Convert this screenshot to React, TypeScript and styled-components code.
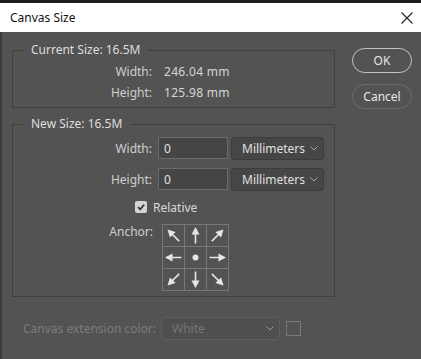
import React from 'react'
import styled, { createGlobalStyle } from 'styled-components'

const GlobalStyle = createGlobalStyle`
    html, body {
        margin: 0;
        padding: 0;
        background: #535353;
    }
    body {
        font-family: "Noto Sans", "Open Sans", sans-serif;
        font-size: 12px;
    }
`;

const anchors = [-45, 0, 45, -90, null, 90, -135, 180, 135];

const Chevron = () => (
    <svg width="8" height="5" viewBox="0 0 8 5">
        <path d="M0.5 0.5 L4 4 L7.5 0.5" fill="none" stroke="#a8a8a8" strokeWidth="1" />
    </svg>
);

const Arrow = ({ angle }: { angle: number | null }) => {
    if (angle === null) {
        return (
            <svg width="21" height="21" viewBox="0 0 21 21">
                <circle cx="10.5" cy="10.5" r="3" fill="#e6e6e6" />
            </svg>
        );
    }
    return (
        <svg width="21" height="21" viewBox="0 0 21 21" style={{ transform: `rotate(${angle}deg)` }}>
            <line x1="10.5" y1="18.5" x2="10.5" y2="8" stroke="#e6e6e6" strokeWidth="1.6" />
            <polygon points="10.5,2 6.5,9.5 14.5,9.5" fill="#e6e6e6" />
        </svg>
    );
};

const App = () => {
    return (
        <Window>
            <GlobalStyle />
            <TitleBar>
                <Title>Canvas Size</Title>
                <svg width="12" height="12" viewBox="0 0 12 12">
                    <path d="M0.5 0.5 L11.5 11.5 M11.5 0.5 L0.5 11.5" stroke="#222" strokeWidth="1.1" />
                </svg>
            </TitleBar>
            <Body>
                <Main>
                    <Group>
                        <Legend>Current Size: 16.5M</Legend>
                        <InfoRow>
                            <Label>Width:</Label>
                            <Value>246.04 mm</Value>
                        </InfoRow>
                        <InfoRow>
                            <Label>Height:</Label>
                            <Value>125.98 mm</Value>
                        </InfoRow>
                    </Group>
                    <Group $new>
                        <Legend>New Size: 16.5M</Legend>
                        <FieldRow>
                            <Label>Width:</Label>
                            <Input>0</Input>
                            <Select>Millimeters<Chevron /></Select>
                        </FieldRow>
                        <FieldRow>
                            <Label>Height:</Label>
                            <Input>0</Input>
                            <Select>Millimeters<Chevron /></Select>
                        </FieldRow>
                        <CheckRow>
                            <CheckBox>
                                <svg width="10" height="10" viewBox="0 0 10 10">
                                    <path d="M2 5 L4.2 7.3 L8.2 2.6" fill="none" stroke="#3a3a3a" strokeWidth="1.8" />
                                </svg>
                            </CheckBox>
                            <span>Relative</span>
                        </CheckRow>
                        <AnchorRow>
                            <AnchorLabel>Anchor:</AnchorLabel>
                            <AnchorGrid>
                                {anchors.map((a, i) => (
                                    <AnchorCell key={i}>
                                        <Arrow angle={a} />
                                    </AnchorCell>
                                ))}
                            </AnchorGrid>
                        </AnchorRow>
                    </Group>
                    <ExtensionRow>
                        <span>Canvas extension color:</span>
                        <DisabledSelect>White<Chevron /></DisabledSelect>
                        <Swatch />
                    </ExtensionRow>
                </Main>
                <Buttons>
                    <Button $primary>OK</Button>
                    <Button>Cancel</Button>
                </Buttons>
            </Body>
        </Window>
    )
}

export default App

const Window = styled.div`
    width: 421px;
    height: 359px;
    display: flex;
    flex-direction: column;
    border-top: 3px solid #1c1c1c;
    box-sizing: border-box;
    overflow: hidden;
`;

const TitleBar = styled.div`
    height: 29px;
    flex: none;
    background: #ffffff;
    display: flex;
    align-items: center;
    justify-content: space-between;
    padding: 0 8px 0 10px;
`;

const Title = styled.div`
    color: #111;
    font-size: 12px;
`;

const Body = styled.div`
    flex: 1;
    display: flex;
    background: #535353;
    border-left: 2px solid #3c3c3c;
`;

const Main = styled.div`
    width: 323px;
    padding: 10px 0 0 10px;
    display: flex;
    flex-direction: column;
`;

const Group = styled.fieldset<{ $new?: boolean }>`
    margin: ${p => (p.$new ? '8px 0 0' : '0')};
    padding: ${p => (p.$new ? '5px 0 5px' : '3px 0 4px')};
    border: 1px solid #404040;
    min-width: 0;
    display: flex;
    flex-direction: column;
`;

const Legend = styled.legend`
    margin-left: 10px;
    padding: 0 8px;
    color: #dedede;
    font-size: 12px;
    line-height: 16px;
`;

const InfoRow = styled.div`
    display: flex;
    align-items: center;
    height: 21px;
    color: #cfcfcf;
`;

const Label = styled.div`
    width: 139px;
    text-align: right;
    color: #cfcfcf;
`;

const Value = styled.div`
    margin-left: 12px;
    color: #d6d6d6;
    letter-spacing: 0.3px;
`;

const FieldRow = styled.div`
    display: flex;
    align-items: center;
    height: 22px;
    margin-bottom: 9px;
`;

const Input = styled.div`
    margin-left: 6px;
    width: 70px;
    height: 22px;
    box-sizing: border-box;
    background: #454545;
    border: 1px solid #6a6a6a;
    color: #e0e0e0;
    padding-left: 5px;
    display: flex;
    align-items: center;
`;

const Select = styled.div`
    margin-left: 3px;
    width: 93px;
    height: 23px;
    box-sizing: border-box;
    background: #464646;
    border: 1px solid #3c3c3c;
    border-radius: 3px;
    color: #e0e0e0;
    padding: 0 5px 0 10px;
    display: flex;
    align-items: center;
    justify-content: space-between;
`;

const CheckRow = styled.div`
    display: flex;
    align-items: center;
    gap: 6px;
    height: 14px;
    margin: 1px 0 0 122px;
    color: #d8d8d8;
`;

const CheckBox = styled.div`
    width: 12px;
    height: 12px;
    border-radius: 2px;
    background: #d4d4d4;
    display: flex;
    align-items: center;
    justify-content: center;
`;

const AnchorRow = styled.div`
    display: flex;
    align-items: flex-start;
    margin-top: 10px;
`;

const AnchorLabel = styled.div`
    width: 140px;
    text-align: right;
    color: #cfcfcf;
    line-height: 16px;
`;

const AnchorGrid = styled.div`
    margin-left: 9px;
    display: grid;
    grid-template-columns: repeat(3, 22px);
    grid-template-rows: repeat(3, 22px);
    border-top: 1px solid #777;
    border-left: 1px solid #777;
`;

const AnchorCell = styled.div`
    border-right: 1px solid #777;
    border-bottom: 1px solid #777;
    display: flex;
    align-items: center;
    justify-content: center;
`;

const ExtensionRow = styled.div`
    display: flex;
    align-items: center;
    margin-top: 20px;
    padding-left: 11px;
    color: #7c7c7c;
`;

const DisabledSelect = styled.div`
    margin-left: 5px;
    width: 119px;
    height: 23px;
    box-sizing: border-box;
    border: 1px solid #606060;
    border-radius: 3px;
    background: #4f4f4f;
    color: #7c7c7c;
    padding: 0 5px 0 10px;
    display: flex;
    align-items: center;
    justify-content: space-between;
    opacity: 0.85;
`;

const Swatch = styled.div`
    margin-left: 6px;
    width: 15px;
    height: 15px;
    box-sizing: border-box;
    border: 1px solid #7a7a7a;
`;

const Buttons = styled.div`
    display: flex;
    flex-direction: column;
    gap: 11px;
    padding: 16px 0 0 17px;
`;

const Button = styled.button<{ $primary?: boolean }>`
    width: 60px;
    height: 25px;
    border-radius: 13px;
    background: transparent;
    border: 1.5px solid ${p => (p.$primary ? '#c4c4c4' : '#6e6e6e')};
    color: #e6e6e6;
    font-family: "Noto Sans", sans-serif;
    font-size: 12px;
    padding: 0;
`;
